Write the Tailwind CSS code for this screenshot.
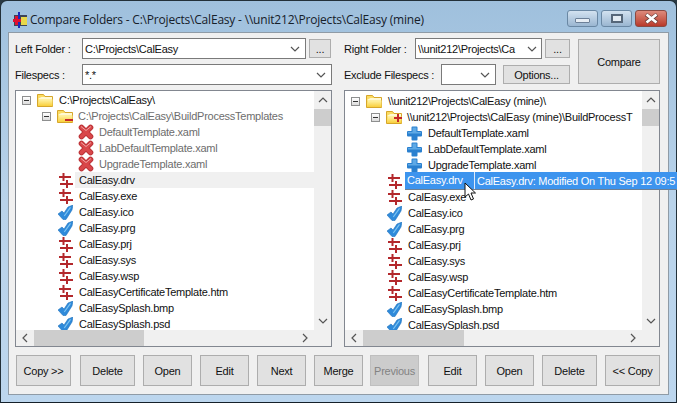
<!DOCTYPE html>
<html><head><meta charset="utf-8"><script src="https://cdn.jsdelivr.net/npm/@tailwindcss/browser@4"></script></head>
<body class="m-0 overflow-hidden bg-[#2a3a44]">
<svg width="0" height="0" class="absolute">
<defs>
<linearGradient id="fg" x1="0" y1="0" x2="0" y2="1"><stop offset="0" stop-color="#fff3a6"/><stop offset="1" stop-color="#f9cf3c"/></linearGradient>
<symbol id="folder" viewBox="0 0 16 14"><path d="M.5 13.500V1.500h6l1.500 2h7.500v10z" fill="#fbdc62" stroke="#d6a62a"/><path d="M1.500 5.500l3-1.500h10.500v2.500h-13.500z" fill="#fff9d2"/><path d="M1 13l1-6.500h13.500V13z" fill="url(#fg)"/></symbol>
<symbol id="x" viewBox="0 0 16 16"><path d="M3.500 3.500 12.500 12.500M12.500 3.500 3.500 12.500" stroke="#bb3236" stroke-width="5.600" stroke-linecap="round"/><path d="M3.500 3.500 12.500 12.500M12.500 3.500 3.500 12.500" stroke="#d9474a" stroke-width="3.800" stroke-linecap="round"/><path d="M3 2.500 8 6.500 13 2.500" stroke="#eea3a2" fill="none"/></symbol>
<symbol id="diff" viewBox="0 0 14 15"><path d="M3.500 0h2v3H12v2H5.500v3h-2V5H0V3h3.500zM7 7h2v3h5v2H9v3H7v-3H1v-2h6z" fill="#b3282c"/></symbol>
<symbol id="check" viewBox="0 0 15 15"><path d="M0 9 4 6 6 8 10 2 15 0 14 5 8 14.500H5z" fill="#2f8ada" stroke="#2274bd" stroke-width=".6" stroke-linejoin="round"/><path d="M6.300 11 12.500 2.300" stroke="#7cc4f2" stroke-width="1.200" fill="none"/></symbol>
<symbol id="plus" viewBox="0 0 15 15"><path d="M5.500.5h4a1 1 0 0 1 1 1v3.500h3.500a1 1 0 0 1 1 1v3.500a1 1 0 0 1-1 1h-3.500v3a1 1 0 0 1-1 1h-4a1 1 0 0 1-1-1v-3H1a1 1 0 0 1-1-1V6a1 1 0 0 1 1-1h3.500V1.500a1 1 0 0 1 1-1z" fill="#2a80cf"/><path d="M5.500 1.500h4V6h-4zM1 6h13v1.500H1z" fill="#5ea9e6"/></symbol>
<symbol id="chev" viewBox="0 0 10 6"><path d="M1 1l4 4 4-4" fill="none" stroke="#555" stroke-width="1.200"/></symbol>
</defs></svg>

<div class="relative w-[677px] h-[403px] rounded-t-[7px] border border-[#223039] border-b-[#15202a] bg-gradient-to-b from-[#9fc0dd] via-[#b9d3ea] to-[#bcd6ee] font-['Liberation_Sans',sans-serif] text-[11px] leading-[16px] text-[#111] tracking-[-0.25px]">
 <!-- title bar -->
 <div class="flex items-start h-[31px]">
  <svg class="ml-[12px] mt-[11px]" width="16" height="16" viewBox="0 0 16 16"><rect x="1" y="3" width="13" height="11" fill="#3c4458"/><rect x="8" y="5" width="6" height="8" fill="#e8d84a"/><rect x="5" y="0" width="2" height="16" fill="#1b2bb8"/><rect x="0" y="7" width="8" height="3" fill="#e01030"/><rect x="2" y="4" width="3" height="9" fill="#e01030"/></svg>
  <span class="ml-[1px] mt-[11px] font-['Open_Sans',sans-serif] text-[12px] tracking-[-0.2px] whitespace-nowrap text-[#16202a]">Compare Folders - C:\Projects\CalEasy - \\unit212\Projects\CalEasy (mine)</span>
  <div class="ml-auto mr-[9px] mt-[9px] flex gap-[3px]">
   <div class="w-[31px] h-[17px] rounded-[3px] border border-[#6a88a4] bg-gradient-to-b from-[#d3e2f0] to-[#9ab6d1] flex items-end justify-center pb-[3px]"><div class="w-[15px] h-[5px] rounded-[1px] bg-[#e6edf4] border border-[#6c8098]"></div></div>
   <div class="w-[31px] h-[17px] rounded-[3px] border border-[#6a88a4] bg-gradient-to-b from-[#d3e2f0] to-[#9ab6d1] flex items-center justify-center"><div class="w-[12px] h-[9px] border-[2px] border-[#56677a] bg-[#e3ebf3]"></div></div>
   <div class="w-[32px] h-[17px] rounded-[3px] border border-[#8a4a42] bg-gradient-to-b from-[#dd8a7c] to-[#b8382a] flex items-center justify-center"><svg width="15" height="11" viewBox="0 0 15 11"><path d="M2 1.500 13 9.500M13 1.500 2 9.500" stroke="#5f3a36" stroke-width="4"/><path d="M2.500 1.500 12.500 9.500M12.500 1.500 2.500 9.500" stroke="#fff" stroke-width="2.800"/></svg></div>
  </div>
 </div>
 <!-- client -->
 <div class="mx-[7px] h-[363px] bg-[#f0f0f0] border border-[#8f9ba6] px-[6px] pt-[5px]">
  <div class="flex gap-[12px]">
   <!-- left -->
   <div class="w-[317px]">
    <div class="flex items-center h-[21px]">
     <span class="w-[67px] shrink-0">Left Folder :</span>
     <div class="w-[224px] h-[21px] shrink-0 bg-white border border-[#7a7a7a] flex items-center pl-[2px]"><span class="flex-1">C:\Projects\CalEasy</span><svg class="mr-[5px]" width="10" height="6"><use href="#chev"/></svg></div>
     <div class="ml-[3px] w-[22px] h-[19px] bg-[#e1e1e1] border border-[#adadad] text-center leading-[18px]">...</div>
    </div>
    <div class="flex items-center h-[21px] mt-[5px]">
     <span class="w-[67px] shrink-0">Filespecs :</span>
     <div class="w-[250px] h-[21px] bg-white border border-[#7a7a7a] flex items-center pl-[2px]"><span class="flex-1">*.*</span><svg class="mr-[5px]" width="10" height="6"><use href="#chev"/></svg></div>
    </div>
    <div class="mt-[5px] w-[317px] h-[257px] border border-[#828790] bg-white relative flex flex-col">
     <div class="flex flex-1 min-h-0">
      <div class="flex-1 overflow-hidden pt-[1px] min-w-0 whitespace-nowrap">
       <div class="flex items-center h-[16px]"><div class="ml-[6px] w-[9px] h-[9px] border border-[#8e8f8f] bg-gradient-to-b from-white to-[#dcdcdc] flex items-center justify-center"><div class="w-[5px] h-px bg-[#333]"></div></div><svg class="ml-[6px] shrink-0" width="16" height="14"><use href="#folder"/></svg><span class="ml-[6px]">C:\Projects\CalEasy\</span></div>
       <div class="flex items-center h-[16px]"><div class="ml-[26px] w-[9px] h-[9px] border border-[#8e8f8f] bg-gradient-to-b from-white to-[#dcdcdc] flex items-center justify-center"><div class="w-[5px] h-px bg-[#333]"></div></div><div class="ml-[6px] relative w-[16px] h-[14px] shrink-0"><svg width="16" height="14"><use href="#folder"/></svg><div class="absolute right-0 bottom-[2px] w-[8px] h-[2px] bg-[#c4262a]"></div></div><span class="ml-[5px] text-[#6d6d6d]">C:\Projects\CalEasy\BuildProcessTemplates</span></div>
       <div class="flex items-center h-[16px]"><svg class="ml-[62px] shrink-0" width="16" height="16"><use href="#x"/></svg><span class="ml-[5px] text-[#6d6d6d]">DefaultTemplate.xaml</span></div>
       <div class="flex items-center h-[16px]"><svg class="ml-[62px] shrink-0" width="16" height="16"><use href="#x"/></svg><span class="ml-[5px] text-[#6d6d6d]">LabDefaultTemplate.xaml</span></div>
       <div class="flex items-center h-[16px]"><svg class="ml-[62px] shrink-0" width="16" height="16"><use href="#x"/></svg><span class="ml-[5px] text-[#6d6d6d]">UpgradeTemplate.xaml</span></div>
       <div class="flex items-center h-[16px]"><svg class="ml-[43px] shrink-0" width="14" height="15"><use href="#diff"/></svg><span class="ml-[2px] flex-1 pl-[4px] bg-[#f0f0f0] leading-[16px]">CalEasy.drv</span></div>
       <div class="flex items-center h-[16px]"><svg class="ml-[43px] shrink-0" width="14" height="15"><use href="#diff"/></svg><span class="ml-[6px]">CalEasy.exe</span></div>
       <div class="flex items-center h-[16px]"><svg class="ml-[42px] shrink-0" width="15" height="15"><use href="#check"/></svg><span class="ml-[6px]">CalEasy.ico</span></div>
       <div class="flex items-center h-[16px]"><svg class="ml-[42px] shrink-0" width="15" height="15"><use href="#check"/></svg><span class="ml-[6px]">CalEasy.prg</span></div>
       <div class="flex items-center h-[16px]"><svg class="ml-[43px] shrink-0" width="14" height="15"><use href="#diff"/></svg><span class="ml-[6px]">CalEasy.prj</span></div>
       <div class="flex items-center h-[16px]"><svg class="ml-[43px] shrink-0" width="14" height="15"><use href="#diff"/></svg><span class="ml-[6px]">CalEasy.sys</span></div>
       <div class="flex items-center h-[16px]"><svg class="ml-[43px] shrink-0" width="14" height="15"><use href="#diff"/></svg><span class="ml-[6px]">CalEasy.wsp</span></div>
       <div class="flex items-center h-[16px]"><svg class="ml-[43px] shrink-0" width="14" height="15"><use href="#diff"/></svg><span class="ml-[6px]">CalEasyCertificateTemplate.htm</span></div>
       <div class="flex items-center h-[16px]"><svg class="ml-[42px] shrink-0" width="15" height="15"><use href="#check"/></svg><span class="ml-[6px]">CalEasySplash.bmp</span></div>
       <div class="flex items-center h-[16px]"><svg class="ml-[42px] shrink-0" width="15" height="15"><use href="#check"/></svg><span class="ml-[6px]">CalEasySplash.psd</span></div>
      </div>
      <div class="w-[17px] shrink-0 bg-[#f0f0f0] flex flex-col items-center">
       <svg class="mt-[6px]" width="10" height="6" viewBox="0 0 10 6"><path d="M1 5l4-4 4 4" fill="none" stroke="#555" stroke-width="1.200"/></svg>
       <div class="mt-[6px] w-[17px] h-[17px] bg-[#cdcdcd]"></div>
       <svg class="mt-auto mb-[6px]" width="10" height="6"><use href="#chev"/></svg>
      </div>
     </div>
     <div class="h-[16px] shrink-0 bg-[#f0f0f0] flex items-center">
      <svg class="ml-[6px]" width="6" height="10" viewBox="0 0 6 10"><path d="M5 1 1 5l4 4" fill="none" stroke="#555" stroke-width="1.200"/></svg>
      <div class="ml-[6px] w-[110px] h-[16px] bg-[#cdcdcd]"></div>
      <svg class="ml-auto mr-[23px]" width="6" height="10" viewBox="0 0 6 10"><path d="M1 1l4 4-4 4" fill="none" stroke="#555" stroke-width="1.200"/></svg>
     </div>
    </div>
   </div>
   <!-- right -->
   <div class="w-[316px]">
    <div class="flex">
     <div class="w-[226px]">
      <div class="flex items-center h-[21px]">
       <span class="w-[71px] shrink-0">Right Folder :</span>
       <div class="w-[127px] h-[21px] shrink-0 bg-white border border-[#7a7a7a] flex items-center pl-[2px] overflow-hidden"><span class="w-[105px] overflow-hidden whitespace-nowrap">\\unit212\Projects\Ca</span><svg class="ml-[4px]" width="10" height="6"><use href="#chev"/></svg></div>
       <div class="ml-[3px] w-[25px] h-[19px] shrink-0 bg-[#e1e1e1] border border-[#adadad] text-center leading-[18px]">...</div>
      </div>
      <div class="flex items-center h-[21px] mt-[5px]">
       <span class="w-[97px] shrink-0">Exclude Filespecs :</span>
       <div class="w-[55px] h-[21px] shrink-0 bg-white border border-[#7a7a7a] flex items-center justify-end pr-[5px]"><svg width="10" height="6"><use href="#chev"/></svg></div>
       <div class="ml-[7px] w-[67px] h-[19px] shrink-0 bg-[#e1e1e1] border border-[#adadad] text-center leading-[18px]">Options...</div>
      </div>
     </div>
     <div class="ml-[8px] mt-px w-[82px] h-[45px] bg-[#e1e1e1] border border-[#adadad] flex items-center justify-center">Compare</div>
    </div>
    <div class="mt-[5px] w-[316px] h-[257px] border border-[#828790] bg-white flex flex-col">
     <div class="flex flex-1 min-h-0">
      <div class="flex-1 overflow-hidden pt-[2px] min-w-0 whitespace-nowrap">
       <div class="flex items-center h-[16px]"><div class="ml-[6px] w-[9px] h-[9px] border border-[#8e8f8f] bg-gradient-to-b from-white to-[#dcdcdc] flex items-center justify-center"><div class="w-[5px] h-px bg-[#333]"></div></div><svg class="ml-[6px] shrink-0" width="16" height="14"><use href="#folder"/></svg><span class="ml-[6px]">\\unit212\Projects\CalEasy (mine)\</span></div>
       <div class="flex items-center h-[16px]"><div class="ml-[26px] w-[9px] h-[9px] border border-[#8e8f8f] bg-gradient-to-b from-white to-[#dcdcdc] flex items-center justify-center"><div class="w-[5px] h-px bg-[#333]"></div></div><div class="ml-[6px] relative w-[16px] h-[14px] shrink-0"><svg width="16" height="14"><use href="#folder"/></svg><div class="absolute right-[3px] bottom-[2px] w-[2px] h-[8px] bg-[#c4262a]"></div><div class="absolute right-0 bottom-[5px] w-[8px] h-[2px] bg-[#c4262a]"></div></div><span class="ml-[5px]">\\unit212\Projects\CalEasy (mine)\BuildProcessT</span></div>
       <div class="flex items-center h-[16px]"><svg class="ml-[62px] shrink-0" width="15" height="15"><use href="#plus"/></svg><span class="ml-[6px]">DefaultTemplate.xaml</span></div>
       <div class="flex items-center h-[16px]"><svg class="ml-[62px] shrink-0" width="15" height="15"><use href="#plus"/></svg><span class="ml-[6px]">LabDefaultTemplate.xaml</span></div>
       <div class="flex items-center h-[16px]"><svg class="ml-[62px] shrink-0" width="15" height="15"><use href="#plus"/></svg><span class="ml-[6px]">UpgradeTemplate.xaml</span></div>
       <div class="flex items-center h-[16px]"><svg class="ml-[43px] shrink-0" width="14" height="15"><use href="#diff"/></svg><span class="ml-[6px]">CalEasy.drv</span></div>
       <div class="flex items-center h-[16px]"><svg class="ml-[43px] shrink-0" width="14" height="15"><use href="#diff"/></svg><span class="ml-[6px]">CalEasy.exe</span></div>
       <div class="flex items-center h-[16px]"><svg class="ml-[42px] shrink-0" width="15" height="15"><use href="#check"/></svg><span class="ml-[6px]">CalEasy.ico</span></div>
       <div class="flex items-center h-[16px]"><svg class="ml-[42px] shrink-0" width="15" height="15"><use href="#check"/></svg><span class="ml-[6px]">CalEasy.prg</span></div>
       <div class="flex items-center h-[16px]"><svg class="ml-[43px] shrink-0" width="14" height="15"><use href="#diff"/></svg><span class="ml-[6px]">CalEasy.prj</span></div>
       <div class="flex items-center h-[16px]"><svg class="ml-[43px] shrink-0" width="14" height="15"><use href="#diff"/></svg><span class="ml-[6px]">CalEasy.sys</span></div>
       <div class="flex items-center h-[16px]"><svg class="ml-[43px] shrink-0" width="14" height="15"><use href="#diff"/></svg><span class="ml-[6px]">CalEasy.wsp</span></div>
       <div class="flex items-center h-[16px]"><svg class="ml-[43px] shrink-0" width="14" height="15"><use href="#diff"/></svg><span class="ml-[6px]">CalEasyCertificateTemplate.htm</span></div>
       <div class="flex items-center h-[16px]"><svg class="ml-[42px] shrink-0" width="15" height="15"><use href="#check"/></svg><span class="ml-[6px]">CalEasySplash.bmp</span></div>
       <div class="flex items-center h-[16px]"><svg class="ml-[42px] shrink-0" width="15" height="15"><use href="#check"/></svg><span class="ml-[6px]">CalEasySplash.psd</span></div>
      </div>
      <div class="w-[17px] shrink-0 bg-[#f0f0f0] flex flex-col items-center">
       <svg class="mt-[6px]" width="10" height="6" viewBox="0 0 10 6"><path d="M1 5l4-4 4 4" fill="none" stroke="#555" stroke-width="1.200"/></svg>
       <div class="mt-[6px] w-[17px] h-[17px] bg-[#cdcdcd]"></div>
       <svg class="mt-auto mb-[6px]" width="10" height="6"><use href="#chev"/></svg>
      </div>
     </div>
     <div class="h-[16px] shrink-0 bg-[#f0f0f0] flex items-center">
      <svg class="ml-[6px]" width="6" height="10" viewBox="0 0 6 10"><path d="M5 1 1 5l4 4" fill="none" stroke="#555" stroke-width="1.200"/></svg>
      <div class="ml-[6px] w-[101px] h-[16px] bg-[#cdcdcd]"></div>
      <svg class="ml-auto mr-[23px]" width="6" height="10" viewBox="0 0 6 10"><path d="M1 1l4 4-4 4" fill="none" stroke="#555" stroke-width="1.200"/></svg>
     </div>
    </div>
   </div>
  </div>
  <!-- buttons -->
  <div class="mt-[8px] ml-px flex h-[31px]">
   <div class="w-[55px] bg-[#e1e1e1] border border-[#adadad] flex items-center justify-center">Copy &gt;&gt;</div>
   <div class="ml-[9px] w-[55px] bg-[#e1e1e1] border border-[#adadad] flex items-center justify-center">Delete</div>
   <div class="ml-[8px] w-[49px] bg-[#e1e1e1] border border-[#adadad] flex items-center justify-center">Open</div>
   <div class="ml-[8px] w-[49px] bg-[#e1e1e1] border border-[#adadad] flex items-center justify-center">Edit</div>
   <div class="ml-[8px] w-[49px] bg-[#e1e1e1] border border-[#adadad] flex items-center justify-center">Next</div>
   <div class="ml-[8px] w-[49px] bg-[#e1e1e1] border border-[#adadad] flex items-center justify-center">Merge</div>
   <div class="ml-[7px] w-[49px] bg-[#cccccc] border border-[#bfbfbf] text-[#838383] flex items-center justify-center">Previous</div>
   <div class="ml-[9px] w-[49px] bg-[#e1e1e1] border border-[#adadad] flex items-center justify-center">Edit</div>
   <div class="ml-[8px] w-[49px] bg-[#e1e1e1] border border-[#adadad] flex items-center justify-center">Open</div>
   <div class="ml-[8px] w-[55px] bg-[#e1e1e1] border border-[#adadad] flex items-center justify-center">Delete</div>
   <div class="ml-[8px] w-[55px] bg-[#e1e1e1] border border-[#adadad] flex items-center justify-center">&lt;&lt; Copy</div>
  </div>
 </div>
 <!-- hover tooltip over the right tree -->
 <div class="absolute left-[404px] top-[171px] w-[272px] h-[18px] bg-[#3d94ee] text-white flex items-center whitespace-nowrap overflow-hidden border-b border-[#6e7f92]">
  <span class="w-[70px] pl-[2px] shrink-0 border-r border-[#dfeaf7] h-[17px]">CalEasy.drv</span><span class="pl-[2px]">CalEasy.drv: Modified On Thu Sep 12 09:5</span>
 </div>
 <svg class="absolute left-[463px] top-[181px]" width="13" height="19" viewBox="0 0 13 19"><path d="M1 1v14l3.500-3 2.500 6 2.500-1-2.500-6h4.500z" fill="#fff" stroke="#111"/></svg>
</div>
</body></html>
